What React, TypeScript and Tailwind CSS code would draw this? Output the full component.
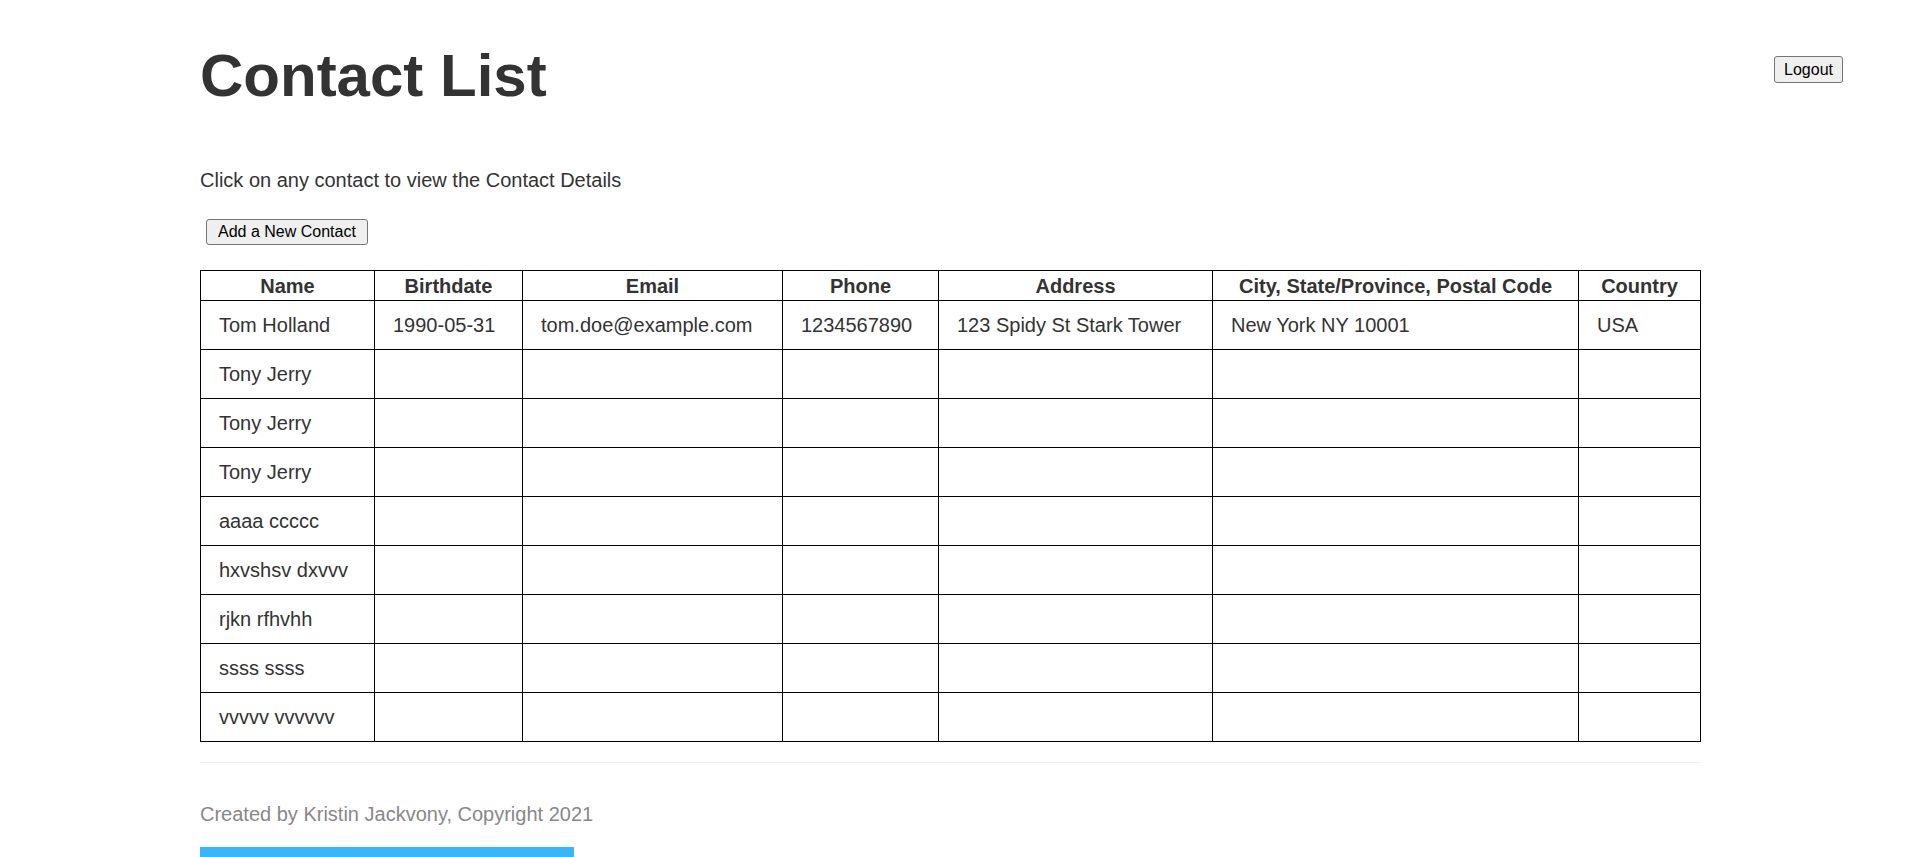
import React from "react";

const contacts = [
  {
    name: "Tom Holland",
    birthdate: "1990-05-31",
    email: "tom.doe@example.com",
    phone: "1234567890",
    address: "123 Spidy St Stark Tower",
    city: "New York NY 10001",
    country: "USA",
  },
  { name: "Tony Jerry" },
  { name: "Tony Jerry" },
  { name: "Tony Jerry" },
  { name: "aaaa ccccc" },
  { name: "hxvshsv dxvvv" },
  { name: "rjkn rfhvhh" },
  { name: "ssss ssss" },
  { name: "vvvvv vvvvvv" },
] as Array<Record<string, string>>;

const columns = [
  { key: "name", label: "Name", w: "w-[174px]" },
  { key: "birthdate", label: "Birthdate", w: "w-[148px]" },
  { key: "email", label: "Email", w: "w-[260px]" },
  { key: "phone", label: "Phone", w: "w-[156px]" },
  { key: "address", label: "Address", w: "w-[274px]" },
  { key: "city", label: "City, State/Province, Postal Code", w: "w-[366px]" },
  { key: "country", label: "Country", w: "w-[122px]" },
];

export default function App() {
  return (
    <div className="min-h-[1000px] bg-white text-[#333] font-['Liberation_Sans',Arial,sans-serif] text-[20px]">
      {/* HEADER */}
      <header className="flex justify-between items-start pt-[41px] pl-[200px] pr-[77px]">
        <h1 className="text-[60px] font-bold leading-[69px] m-0">Contact List</h1>
        <button className="mt-[15px] h-[27px] px-[9px] text-[16px] leading-[18px] text-black bg-[#efefef] border border-[#767676] rounded-[3px]">
          Logout
        </button>
      </header>

      <main className="pl-[200px] w-[1700px]">
        <p className="mt-[59px] leading-[23px]">Click on any contact to view the Contact Details</p>

        <button className="mt-[27px] ml-[6px] h-[26px] px-[11px] text-[16px] leading-[18px] text-black bg-[#efefef] border border-[#767676] rounded-[3px]">
          Add a New Contact
        </button>

        <table className="mt-[25px] w-[1500px] border-collapse border border-black table-fixed">
          <thead>
            <tr>
              {columns.map((c) => (
                <th
                  key={c.key}
                  className={`${c.w} border border-black pt-[3px] pb-[2px] leading-[24px] font-bold text-center`}
                >
                  {c.label}
                </th>
              ))}
            </tr>
          </thead>
          <tbody>
            {contacts.map((row, i) => (
              <tr key={i} className="cursor-pointer">
                {columns.map((c) => (
                  <td
                    key={c.key}
                    className="border border-black py-[12px] px-[18px] leading-[24px] text-left whitespace-nowrap"
                  >
                    {row[c.key] ?? ""}
                  </td>
                ))}
              </tr>
            ))}
          </tbody>
        </table>
      </main>

      {/* FOOTER */}
      <footer className="pl-[200px] w-[1700px]">
        <hr className="mt-[20px] border-0 border-t border-[#eeeeee]" />
        <p className="mt-[40px] leading-[23px] text-[#888]">Created by Kristin Jackvony, Copyright 2021</p>
        <div className="mt-[21px] w-[374px] h-[40px] bg-[#38b6fb]" />
      </footer>
    </div>
  );
}
